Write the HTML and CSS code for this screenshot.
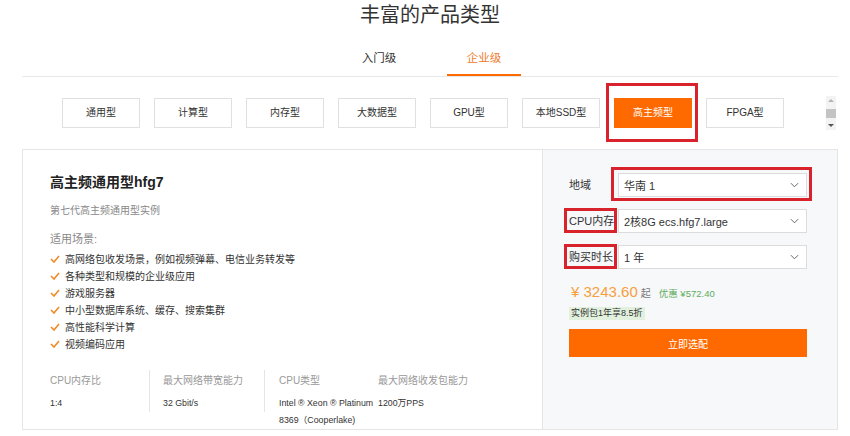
FILE: index.html
```html
<!DOCTYPE html>
<html lang="zh-CN">
<head>
  <meta charset="UTF-8">
  <meta name="viewport" content="width=device-width, initial-scale=1.0">
  <title>丰富的产品类型</title>
  <link rel="stylesheet" href="styles.css">
</head>
<body>
  <div class="page">
    <h2 class="page-title">丰富的产品类型</h2>

    <div class="tabs">
      <div class="tab">入门级</div>
      <div class="tab active">企业级</div>
    </div>

    <!-- Instance families -->
    <div class="types">
      <div class="type">通用型</div>
      <div class="type">计算型</div>
      <div class="type">内存型</div>
      <div class="type">大数据型</div>
      <div class="type">GPU型</div>
      <div class="type">本地SSD型</div>
      <div class="type active marked mark-type">高主频型</div>
      <div class="type">FPGA型</div>
      <div class="scroll">
        <span class="arrow up"></span>
        <span class="thumb"></span>
        <span class="arrow down"></span>
      </div>
    </div>

    <div class="card">
      <div class="info">
        <h3 class="info-title">高主频通用型hfg7</h3>
        <p class="info-sub">第七代高主频通用型实例</p>
        <p class="scene-title">适用场景:</p>
        <ul class="scenes">
          <li><svg class="check" viewBox="0 0 10 8"><polyline points="1,4 4,7 9,1"/></svg>高网络包收发场景，例如视频弹幕、电信业务转发等</li>
          <li><svg class="check" viewBox="0 0 10 8"><polyline points="1,4 4,7 9,1"/></svg>各种类型和规模的企业级应用</li>
          <li><svg class="check" viewBox="0 0 10 8"><polyline points="1,4 4,7 9,1"/></svg>游戏服务器</li>
          <li><svg class="check" viewBox="0 0 10 8"><polyline points="1,4 4,7 9,1"/></svg>中小型数据库系统、缓存、搜索集群</li>
          <li><svg class="check" viewBox="0 0 10 8"><polyline points="1,4 4,7 9,1"/></svg>高性能科学计算</li>
          <li><svg class="check" viewBox="0 0 10 8"><polyline points="1,4 4,7 9,1"/></svg>视频编码应用</li>
        </ul>
        <div class="specs">
          <div class="spec spec-1">
            <div class="spec-label">CPU内存比</div>
            <div class="spec-value">1:4</div>
          </div>
          <div class="spec spec-2">
            <div class="spec-label">最大网络带宽能力</div>
            <div class="spec-value">32 Gbit/s</div>
          </div>
          <div class="spec spec-3">
            <div class="spec-label">CPU类型</div>
            <div class="spec-value">Intel ® Xeon ® Platinum<br>8369（Cooperlake)</div>
          </div>
          <div class="spec spec-4">
            <div class="spec-label">最大网络收发包能力</div>
            <div class="spec-value">1200万PPS</div>
          </div>
        </div>
      </div>

      <div class="buy">
        <div class="row">
          <span class="row-label">地域</span>
          <div class="select marked mark-select">
            <span>华南 1</span>
            <svg class="chevron" viewBox="0 0 10 6"><polyline points="1,1 5,5 9,1"/></svg>
          </div>
        </div>
        <div class="row">
          <span class="row-label marked mark-label">CPU内存</span>
          <div class="select">
            <span>2核8G ecs.hfg7.large</span>
            <svg class="chevron" viewBox="0 0 10 6"><polyline points="1,1 5,5 9,1"/></svg>
          </div>
        </div>
        <div class="row">
          <span class="row-label marked mark-label">购买时长</span>
          <div class="select">
            <span>1 年</span>
            <svg class="chevron" viewBox="0 0 10 6"><polyline points="1,1 5,5 9,1"/></svg>
          </div>
        </div>
        <div class="price">
          <span class="amount">¥ 3243.60</span>
          <span class="from">起</span>
          <span class="discount">优惠 ¥572.40</span>
        </div>
        <div class="tag">实例包1年享8.5折</div>
        <button class="btn">立即选配</button>
      </div>
    </div>
  </div>
</body>
</html>
```

FILE: styles.css
```css
* { box-sizing: border-box; }
body {
  margin: 0;
  background: #fff;
  font-family: "Liberation Sans", "Noto Sans CJK SC", sans-serif;
  color: #333;
}
.page {
  width: 816px;
  margin-left: 22px;
}
.page-title {
  margin: 0;
  font-size: 20px;
  line-height: 30px;
  font-weight: normal;
  text-align: center;
  color: #333;
}

/* tabs */
.tabs {
  display: flex;
  justify-content: center;
  gap: 31px;
  margin-top: 10px;
  padding-left: 3px;
  border-bottom: 1px solid #e8e8e8;
}
.tab {
  width: 74px;
  height: 36px;
  line-height: 36px;
  text-align: center;
  font-size: 11.5px;
  color: #333;
}
.tab.active {
  color: #ef7b2c;
  box-shadow: inset 0 -2px 0 #ff6a00;
}

/* family buttons */
.types {
  display: flex;
  align-items: center;
  gap: 14px;
  padding: 21px 2px 0 40px;
}
.type {
  width: 78px;
  height: 30px;
  line-height: 28px;
  border: 1px solid #e0e0e0;
  text-align: center;
  font-size: 10px;
  color: #333;
  background: #fff;
}
.type.active {
  background: #ff6a00;
  border-color: #ff6a00;
  color: #fff;
}
.scroll {
  margin: -2px 0 -2px auto;
  width: 10px;
  height: 34px;
  background: #f3f3f3;
  display: flex;
  flex-direction: column;
  align-items: center;
  justify-content: space-between;
  padding: 3px 0;
}
.arrow {
  width: 0;
  height: 0;
  border-left: 3px solid transparent;
  border-right: 3px solid transparent;
}
.arrow.up { border-bottom: 3px solid #b5b5b5; }
.arrow.down { border-top: 3px solid #555; }
.thumb {
  width: 10px;
  height: 9px;
  background: #c4c4c4;
}

/* red annotation boxes */
.marked { position: relative; }
.marked::after {
  content: '';
  position: absolute;
  border: 3px solid #d8232c;
  pointer-events: none;
}
.mark-type::after { left: -9px; right: -7px; top: -16px; bottom: -15px; }
.mark-select::after { left: -8px; right: -6px; top: -7px; bottom: -5px; }
.mark-label::after { left: -5px; right: 1px; top: -1px; bottom: 0; }

/* card */
.card {
  display: flex;
  margin-top: 21px;
  border: 1px solid #e5e5e5;
}
.info {
  flex: 1;
  padding: 22px 0 0 27px;
}
.info-title {
  margin: 0;
  font-size: 14px;
  line-height: 20px;
  font-weight: bold;
  color: #222;
}
.info-sub {
  margin: 12px 0 0;
  font-size: 10px;
  line-height: 14px;
  color: #888;
}
.scene-title {
  margin: 13px 0 0;
  font-size: 11px;
  line-height: 16px;
  color: #888;
}
.scenes {
  list-style: none;
  margin: 3px 0 0;
  padding: 0;
}
.scenes li {
  display: flex;
  align-items: center;
  height: 17px;
  font-size: 10px;
  color: #333;
}
.check {
  width: 10px;
  height: 8px;
  margin-right: 5px;
  fill: none;
  stroke: #f08a24;
  stroke-width: 1.6;
}
.specs {
  display: flex;
  align-items: flex-start;
  margin-top: 18px;
}
.spec { padding-top: 4px; }
.spec-1 { width: 100px; border-right: 1px solid #e5e5e5; }
.spec-2 { width: 115px; padding-left: 13px; border-right: 1px solid #e5e5e5; }
.spec-3 { width: 113px; padding-left: 14px; }
.spec-label {
  font-size: 10px;
  line-height: 14px;
  color: #999;
}
.spec-value {
  margin-top: 7px;
  font-size: 8.8px;
  line-height: 17px;
  color: #333;
}

/* purchase panel */
.buy {
  width: 295px;
  background: #f7f8fa;
  border-left: 1px solid #e5e5e5;
  padding: 23px 0 0 26px;
}
.row {
  display: flex;
  align-items: center;
  margin-bottom: 12px;
}
.row-label {
  width: 49px;
  height: 24px;
  line-height: 24px;
  font-size: 11px;
  color: #333;
}
.select {
  width: 189px;
  height: 24px;
  display: flex;
  align-items: center;
  justify-content: space-between;
  padding: 0 7px 0 5px;
  background: #fff;
  border: 1px solid #dcdcdc;
  font-size: 11px;
  color: #333;
}
.chevron {
  width: 9px;
  height: 6px;
  fill: none;
  stroke: #666;
  stroke-width: 1.1;
}
.price {
  display: flex;
  align-items: baseline;
  margin-top: 13px;
  padding-left: 2px;
  line-height: 20px;
}
.amount {
  font-size: 15px;
  color: #f5a03c;
}
.from {
  margin-left: 3px;
  font-size: 10px;
  color: #777;
}
.discount {
  margin-left: 8px;
  font-size: 9.5px;
  color: #5dab5d;
}
.tag {
  width: fit-content;
  margin-top: 3px;
  padding: 0 2px;
  height: 13px;
  line-height: 13px;
  font-size: 9px;
  color: #333;
  background: #e2f1de;
}
.btn {
  display: block;
  width: 238px;
  height: 28px;
  margin-top: 9px;
  border: none;
  background: #ff6a00;
  color: #fff;
  font-family: inherit;
  font-size: 10px;
  cursor: pointer;
}
```
